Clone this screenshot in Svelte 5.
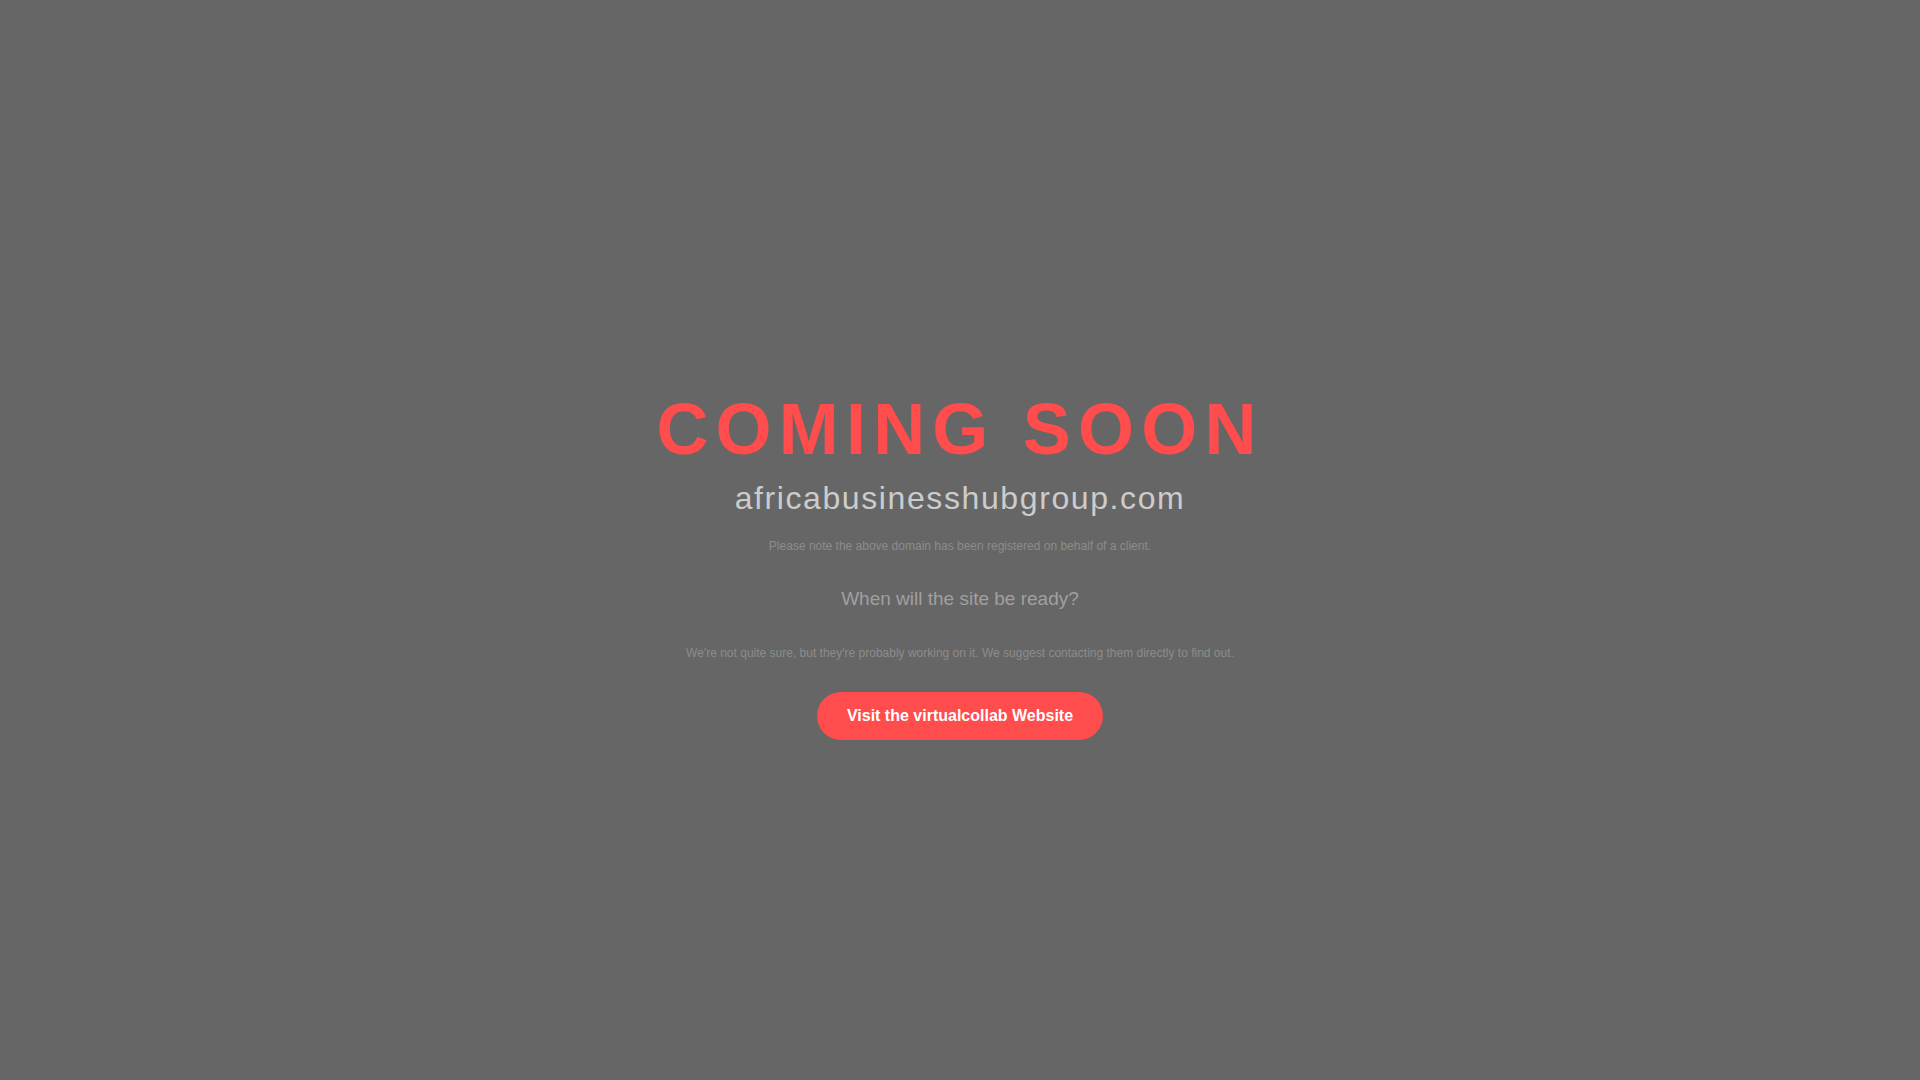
<script lang="ts">
	const domain = 'africabusinesshubgroup.com';
	const host = 'virtualcollab';
</script>

<main class="page">
	<h1 class="title">Coming Soon</h1>
	<h2 class="domain">{domain}</h2>
	<p class="note">Please note the above domain has been registered on behalf of a client.</p>
	<h3 class="question">When will the site be ready?</h3>
	<p class="note">
		We're not quite sure, but they're probably working on it. We suggest contacting them directly to find out.
	</p>
	<a class="visit" href="#{host}">Visit the {host} Website</a>
</main>

<style>
	:global(body) {
		margin: 0;
		background: #666;
	}

	.page {
		box-sizing: border-box;
		display: flex;
		flex-direction: column;
		align-items: center;
		justify-content: center;
		min-height: 100vh;
		padding-top: 48px;
		font-family: Helvetica, Arial, sans-serif;
		text-align: center;
	}

	.title {
		margin: 0;
		font-size: 72px;
		line-height: 82px;
		letter-spacing: 0.1em;
		text-transform: uppercase;
		color: #ff4c4c;
	}

	.domain {
		margin: 10px 0 23px;
		font-size: 32px;
		line-height: 36px;
		font-weight: 400;
		letter-spacing: 0.05em;
		color: #ccc;
	}

	.note {
		margin: 0;
		font-size: 12px;
		line-height: 14px;
		color: #8c8c8c;
	}

	.question {
		margin: 35px 0 36px;
		font-size: 19px;
		line-height: 22px;
		font-weight: 400;
		color: #a0a0a0;
	}

	.visit {
		margin-top: 32px;
		padding: 15px 30px;
		border-radius: 50px;
		background: #ff4c4c;
		color: #fff;
		font-size: 16px;
		line-height: 18px;
		font-weight: 700;
		text-decoration: none;
	}

	.visit:hover {
		background: #e64444;
	}
</style>
